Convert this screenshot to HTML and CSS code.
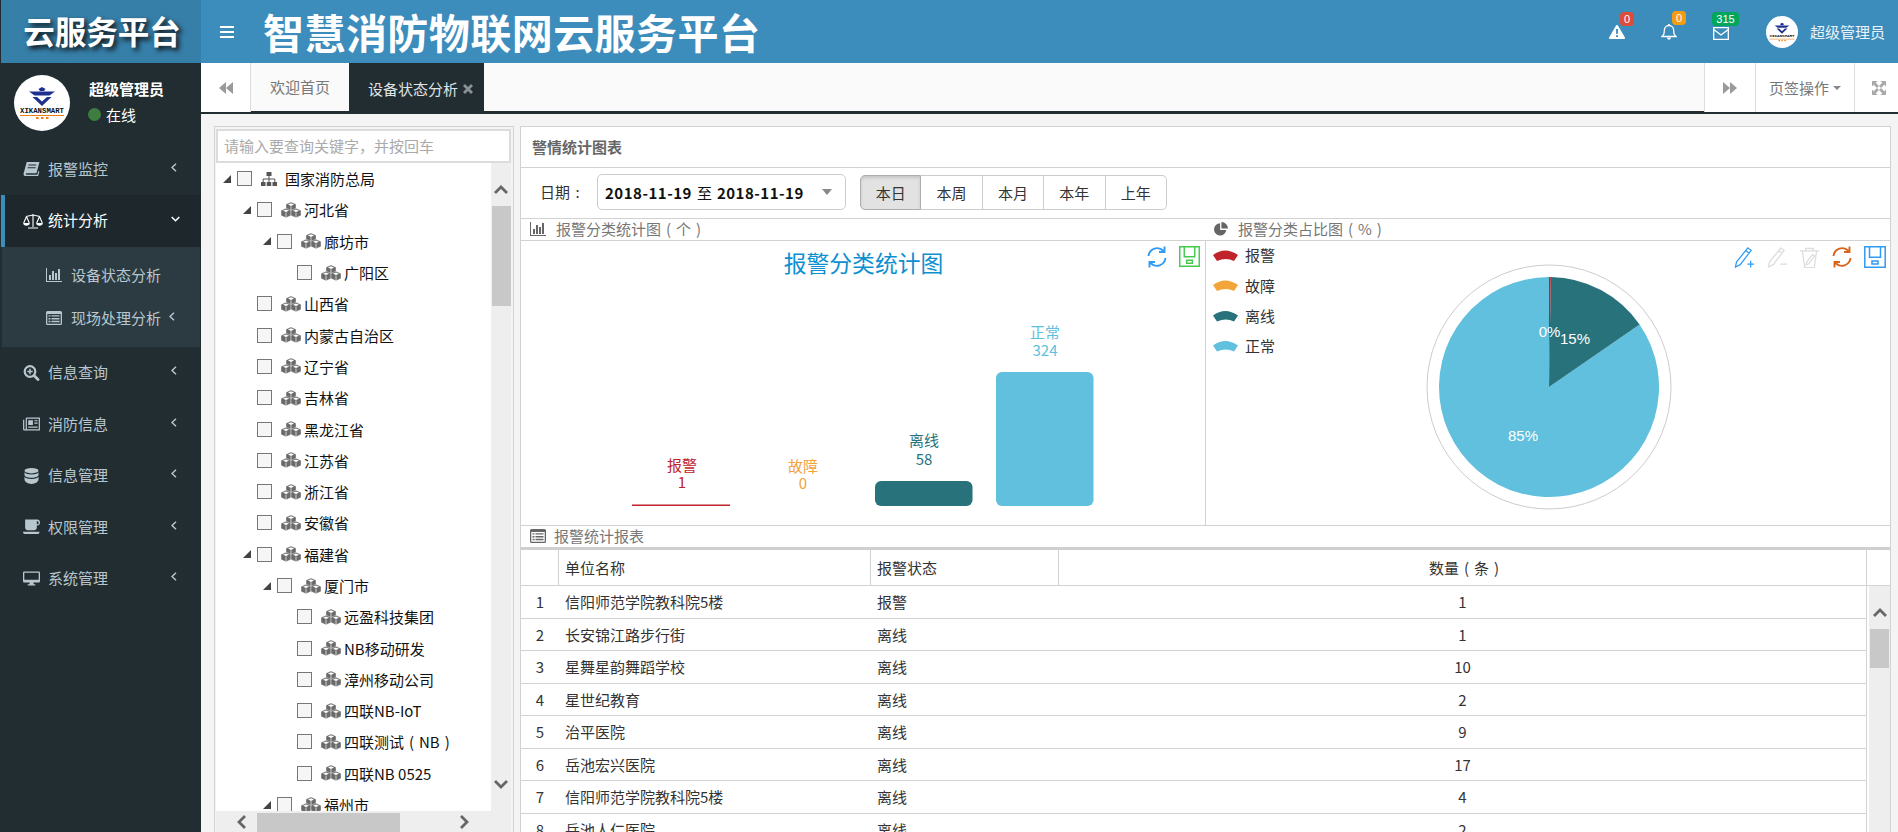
FILE: index.html
```html
<!DOCTYPE html>
<html lang="zh-CN">
<head>
<meta charset="utf-8">
<title>智慧消防物联网云服务平台</title>
<link rel="stylesheet" href="styles.css">
</head>
<body>
<svg class="sprite" aria-hidden="true">
  <symbol id="i-cubes" viewBox="0 0 20 16"><path fill="currentColor" stroke="#fff" stroke-width=".4" d="M10 0l5 2.200v5.200l-5 2.200-5-2.200V2.200z"/><path fill="#fff" d="M10 1.300l3 1.300-3 1.300-3-1.300z"/><path stroke="#fff" stroke-width=".7" d="M10 4.200v5"/><g transform="translate(-5 6.200)"><path fill="currentColor" stroke="#fff" stroke-width=".4" d="M10 0l5 2.200v5.200l-5 2.200-5-2.200V2.200z"/><path fill="#fff" d="M10 1.300l3 1.300-3 1.300-3-1.300z"/><path stroke="#fff" stroke-width=".7" d="M10 4.200v5"/></g><g transform="translate(5 6.200)"><path fill="currentColor" stroke="#fff" stroke-width=".4" d="M10 0l5 2.200v5.200l-5 2.200-5-2.200V2.200z"/><path fill="#fff" d="M10 1.300l3 1.300-3 1.300-3-1.300z"/><path stroke="#fff" stroke-width=".7" d="M10 4.200v5"/></g></symbol>
  <symbol id="i-sitemap" viewBox="0 0 16 14"><path fill="currentColor" d="M5.500 0h5v4h-5zM0 10h4.500v4H0zM5.750 10h4.500v4h-4.500zM11.500 10H16v4h-4.500z"/><path fill="none" stroke="currentColor" d="M8 4v6M2.200 10V7h11.600v3"/></symbol>
  <symbol id="i-book" viewBox="0 0 16 14"><path fill="currentColor" d="M3.500.3H15.500l-2.800 10.700H3.400c-1 0-1 1.500 0 1.500h10.100l1-3.700.9.600-1.100 4.300H2.500C1 13.700.2 12.400.6 11z"/><path stroke="#222d32" d="M5 3.300h7.500M4.400 5.800h7.500"/></symbol>
  <symbol id="i-scale" viewBox="0 0 20 16"><path fill="none" stroke="currentColor" stroke-width="1.100" d="M10 1v13M5 15h10M3 3.500l7-1.500 7 1.500M3.500 3.500L.7 10M3.500 3.500L6.300 10M16.500 3.500L13.700 10M16.500 3.500L19.300 10"/><path fill="currentColor" d="M.2 10h6.600c0 2-1.500 2.700-3.300 2.700S.2 12 .2 10zM13.200 10h6.600c0 2-1.500 2.700-3.300 2.700s-3.300-.7-3.300-2.700z"/></symbol>
  <symbol id="i-bars" viewBox="0 0 16 14"><path fill="currentColor" d="M0 0h1v13h15v1H0zM3 7h2v5H3zM6 3h2v9H6zM9 5h2v7H9zM12 1h2v11h-2z"/></symbol>
  <symbol id="i-list" viewBox="0 0 16 14"><path fill="currentColor" fill-rule="evenodd" d="M1.500 0h13A1.500 1.500 0 0 1 16 1.500v11a1.500 1.500 0 0 1-1.500 1.500h-13A1.500 1.500 0 0 1 0 12.500v-11A1.500 1.500 0 0 1 1.500 0zM1.300 3v9.700h13.400V3zM2.500 4.200h2v1.400h-2zM5.500 4.200h8v1.400h-8zM2.500 7h2v1.400h-2zM5.500 7h8v1.400h-8zM2.500 9.800h2v1.400h-2zM5.500 9.800h8v1.400h-8z"/></symbol>
  <symbol id="i-search" viewBox="0 0 16 16"><circle cx="6.500" cy="6.500" r="5.300" fill="none" stroke="currentColor" stroke-width="2.200"/><path stroke="currentColor" stroke-width="2.800" stroke-linecap="round" d="M10.800 10.800l3.700 3.700"/><path stroke="currentColor" stroke-width="1.500" d="M3.800 6.500h5.400M6.500 3.800v5.400"/></symbol>
  <symbol id="i-news" viewBox="0 0 18 14"><path fill="none" stroke="currentColor" stroke-width="1.300" d="M3.500.7h13.800v12.600H1.200a.6.600 0 0 1-.5-.6V2.500M3.500.7v12"/><path fill="currentColor" d="M5.500 3h5v5h-5zM12 3h3.500v1.200H12zM12 5.500h3.500v1.200H12zM5.500 9.700h10v1.200h-10z"/></symbol>
  <symbol id="i-db" viewBox="0 0 14 16"><ellipse cx="7" cy="2.700" rx="7" ry="2.700" fill="currentColor"/><path fill="currentColor" d="M0 4.300c1 1.600 3.700 2.200 7 2.200s6-.6 7-2.200v2.800c0 1.500-3 2.700-7 2.700S0 8.600 0 7.100zM0 8.800c1 1.600 3.700 2.200 7 2.200s6-.6 7-2.200v2.500C14 13.800 11 16 7 16s-7-2.200-7-4.700z"/></symbol>
  <symbol id="i-coffee" viewBox="0 0 16 14"><path fill="currentColor" fill-rule="evenodd" d="M2 0h11.500C15 0 16 1.200 16 2.800S15 5.700 13.500 5.700H13v1.800C13 9 12 10 10.500 10h-6C3 10 2 9 2 7.500zM13 1.500v2.900h.5c.7 0 1.200-.6 1.200-1.500s-.5-1.400-1.200-1.400z"/><path fill="currentColor" d="M0 11.500h15.500c0 1.300-.8 2.200-2 2.200H2c-1.200 0-2-.9-2-2.200z"/></symbol>
  <symbol id="i-desktop" viewBox="0 0 17 15"><path fill="currentColor" fill-rule="evenodd" d="M1.200 0h14.600A1.200 1.200 0 0 1 17 1.200v8.600A1.200 1.200 0 0 1 15.800 11H10.500v1.700h1.800V14H4.700v-1.300h1.800V11H1.200A1.200 1.200 0 0 1 0 9.800V1.200A1.200 1.200 0 0 1 1.200 0zM1.300 1.300v7h14.400v-7z"/></symbol>
  <symbol id="i-pie" viewBox="0 0 16 16"><path fill="currentColor" d="M7 1.500A7 7 0 1 0 14 9H7zM8.500 0v7.500H16A7.500 7.500 0 0 0 8.500 0z"/></symbol>
  <symbol id="i-warn" viewBox="0 0 16 14"><path fill="#fff" d="M8 0c.5 0 .9.300 1.100.7l6.700 11.600c.400.800 0 1.700-1 1.700H1.200c-1 0-1.400-.9-1-1.700L6.900.7C7.100.3 7.500 0 8 0z"/><path fill="#3c8dbc" d="M7 4h2l-.2 5H7.200zM7 10.200h2V12H7z"/></symbol>
  <symbol id="i-bell" viewBox="0 0 16 16"><path fill="none" stroke="#fff" stroke-width="1.300" d="M1 12.500c1.500-1 2.300-2.500 2.300-6C3.300 3.500 5.300 1.500 8 1.500s4.700 2 4.700 5c0 3.500.8 5 2.300 6z"/><path fill="#fff" d="M6 13.500h4c0 1.300-.9 2.200-2 2.200s-2-.9-2-2.200zM7.200 0h1.600v2H7.200z"/></symbol>
  <symbol id="i-mail" viewBox="0 0 16 13"><path fill="none" stroke="#fff" stroke-width="1.300" d="M.7.700h14.600v11.600H.7zM.7 2.500L8 8l7.300-5.500"/></symbol>
  <symbol id="i-back" viewBox="0 0 14 12"><path fill="currentColor" d="M7 0v12L0 6zM14 0v12L7 6z"/></symbol>
  <symbol id="i-fwd" viewBox="0 0 14 12"><path fill="currentColor" d="M0 0v12l7-6zM7 0v12l7-6z"/></symbol>
  <symbol id="i-close" viewBox="0 0 10 10"><path stroke="currentColor" stroke-width="2.800" d="M1 1l8 8M9 1l-8 8"/></symbol>
  <symbol id="i-expand" viewBox="0 0 14 14"><path fill="currentColor" d="M0 0h5.500L3.800 1.700 7 4.900 4.900 7 1.700 3.800 0 5.500zM14 0v5.500l-1.700-1.700L9.100 7 7 4.900l3.200-3.200L8.500 0zM0 14V8.500l1.700 1.700L4.900 7 7 9.100l-3.200 3.200L5.500 14zM14 14H8.500l1.700-1.700L7 9.100 9.100 7l3.200 3.200L14 8.500z"/></symbol>
  <symbol id="i-refresh" viewBox="0 0 22 22"><path fill="none" stroke="currentColor" stroke-width="1.900" d="M2.500 10A8.700 8.700 0 0 1 17.500 5M18.500 .5V6H13M19.500 12A8.700 8.700 0 0 1 4.500 17M3.500 21.500V16H9"/></symbol>
  <symbol id="i-save" viewBox="0 0 22 22"><path fill="none" stroke="currentColor" stroke-width="1.500" d="M.8.800h20.400v20.400H.8zM5.500.8v10.500h11V.8M8 15h6v3H8z"/></symbol>
  <symbol id="i-penplus" viewBox="0 0 22 22"><path fill="none" stroke="currentColor" stroke-width="1.300" d="M14.500 1l3.500 2.500L6.500 18.500 1.500 21l1.200-5.500zM12.500 4l3.500 2.800M14 18h7M17.500 14.500v7"/></symbol>
  <symbol id="i-penminus" viewBox="0 0 22 22"><path fill="none" stroke="currentColor" stroke-width="1.300" d="M14.500 1l3.500 2.500L6.500 18.500 1.500 21l1.200-5.500zM12.500 4l3.500 2.800M14 18h7"/></symbol>
  <symbol id="i-trash" viewBox="0 0 22 22"><path fill="none" stroke="currentColor" stroke-width="1.300" d="M1 4h20M7 4V1.500h8V4M3.500 4l2.500 17.500h10L18.500 4M14 8l-6 8-.6 3 3-1.600 6-8z"/></symbol>
  <symbol id="i-logo" viewBox="0 0 56 56"><path fill="#1d2f8f" d="M15 16.500h26l-5.500 4h-15z"/><path fill="#1d2f8f" d="M18.500 22h4.500l5 4.500 5-4.500h4.500L28 31z"/><path fill="#1d2f8f" d="M24.500 14l3.500-2 3.500 2-1.500 2h-4z"/><path stroke="#ef7d14" d="M6 40.500h44"/><path fill="#ef7d14" d="M22 42h2.500v2H22zM27 42h2.500v2H27zM32 42h2.500v2H32z"/></symbol>
</svg>

<div class="app">
  <header class="topbar">
    <div class="brand">云服务平台</div>
    <div class="burger" aria-label="菜单"><i></i><i></i><i></i></div>
    <h1 class="app-title">智慧消防物联网云服务平台</h1>
    <div class="top-right">
      <div class="nav-icon nav-warn"><svg class="ni-warn"><use href="#i-warn"/></svg><span class="badge b-red">0</span></div>
      <div class="nav-icon nav-bell"><svg class="ni-bell"><use href="#i-bell"/></svg><span class="badge b-orange">0</span></div>
      <div class="nav-icon nav-mail"><svg class="ni-mail"><use href="#i-mail"/></svg><span class="badge b-green">315</span></div>
      <svg class="top-avatar" viewBox="0 0 56 56"><use href="#i-logo" width="56" height="56"/><text x="28" y="37.500" class="logo-text" textLength="44" lengthAdjust="spacingAndGlyphs">XIKANSMART</text></svg>
      <span class="top-user">超级管理员</span>
    </div>
  </header>

  <div class="main">
    <aside class="sidebar">
      <div class="user-panel">
        <svg class="avatar" viewBox="0 0 56 56"><use href="#i-logo" width="56" height="56"/><text x="28" y="37.500" class="logo-text" textLength="44" lengthAdjust="spacingAndGlyphs">XIKANSMART</text></svg>
        <div class="user-info">
          <div class="user-name">超级管理员</div>
          <div class="user-state"><i class="dot"></i>在线</div>
        </div>
      </div>
      <nav class="menu">
        <a class="menu-item"><svg class="mi"><use href="#i-book"/></svg><span>报警监控</span><svg class="chev" viewBox="0 0 6 9"><path d="M5 .7L1 4.500 5 8.300"/></svg></a>
        <a class="menu-item active"><svg class="mi"><use href="#i-scale"/></svg><span>统计分析</span><svg class="chev-down" viewBox="0 0 9 6"><path d="M.7 1l3.800 3.800L8.300 1"/></svg></a>
        <div class="submenu">
          <a class="sub-item"><svg class="si"><use href="#i-bars"/></svg><span>设备状态分析</span></a>
          <a class="sub-item"><svg class="si"><use href="#i-list"/></svg><span>现场处理分析</span><svg class="chev sub-chev" viewBox="0 0 6 9"><path d="M5 .7L1 4.500 5 8.300"/></svg></a>
        </div>
        <a class="menu-item"><svg class="mi"><use href="#i-search"/></svg><span>信息查询</span><svg class="chev" viewBox="0 0 6 9"><path d="M5 .7L1 4.500 5 8.300"/></svg></a>
        <a class="menu-item"><svg class="mi"><use href="#i-news"/></svg><span>消防信息</span><svg class="chev" viewBox="0 0 6 9"><path d="M5 .7L1 4.500 5 8.300"/></svg></a>
        <a class="menu-item"><svg class="mi"><use href="#i-db"/></svg><span>信息管理</span><svg class="chev" viewBox="0 0 6 9"><path d="M5 .7L1 4.500 5 8.300"/></svg></a>
        <a class="menu-item"><svg class="mi"><use href="#i-coffee"/></svg><span>权限管理</span><svg class="chev" viewBox="0 0 6 9"><path d="M5 .7L1 4.500 5 8.300"/></svg></a>
        <a class="menu-item"><svg class="mi"><use href="#i-desktop"/></svg><span>系统管理</span><svg class="chev" viewBox="0 0 6 9"><path d="M5 .7L1 4.500 5 8.300"/></svg></a>
      </nav>
    </aside>

    <div class="workspace">
      <div class="tabbar">
        <div class="tab-ctl ctl-back"><svg class="ctl-arrow"><use href="#i-back"/></svg></div>
        <div class="tab">欢迎首页</div>
        <div class="tab tab-active">设备状态分析<svg class="tab-x"><use href="#i-close"/></svg></div>
        <div class="tab-fill"></div>
        <div class="tab-ctl ctl-fwd"><svg class="ctl-arrow"><use href="#i-fwd"/></svg></div>
        <div class="tab-ctl ctl-ops">页签操作<i class="caret"></i></div>
        <div class="tab-ctl ctl-full"><svg class="ctl-expand"><use href="#i-expand"/></svg></div>
      </div>

      <div class="content">
        <section class="tree-panel">
          <input class="tree-search" type="text" placeholder="请输入要查询关键字，并按回车">
          <div class="tree-body">
            <ul class="tree">
              <li class="node l0 open"><i class="tog"></i><i class="cb"></i><svg class="ic-site"><use href="#i-sitemap"/></svg><span>国家消防总局</span></li>
              <li class="node l1 open"><i class="tog"></i><i class="cb"></i><svg class="ic"><use href="#i-cubes"/></svg><span>河北省</span></li>
              <li class="node l2 open"><i class="tog"></i><i class="cb"></i><svg class="ic"><use href="#i-cubes"/></svg><span>廊坊市</span></li>
              <li class="node l3"><i class="tog"></i><i class="cb"></i><svg class="ic"><use href="#i-cubes"/></svg><span>广阳区</span></li>
              <li class="node l1"><i class="tog"></i><i class="cb"></i><svg class="ic"><use href="#i-cubes"/></svg><span>山西省</span></li>
              <li class="node l1"><i class="tog"></i><i class="cb"></i><svg class="ic"><use href="#i-cubes"/></svg><span>内蒙古自治区</span></li>
              <li class="node l1"><i class="tog"></i><i class="cb"></i><svg class="ic"><use href="#i-cubes"/></svg><span>辽宁省</span></li>
              <li class="node l1"><i class="tog"></i><i class="cb"></i><svg class="ic"><use href="#i-cubes"/></svg><span>吉林省</span></li>
              <li class="node l1"><i class="tog"></i><i class="cb"></i><svg class="ic"><use href="#i-cubes"/></svg><span>黑龙江省</span></li>
              <li class="node l1"><i class="tog"></i><i class="cb"></i><svg class="ic"><use href="#i-cubes"/></svg><span>江苏省</span></li>
              <li class="node l1"><i class="tog"></i><i class="cb"></i><svg class="ic"><use href="#i-cubes"/></svg><span>浙江省</span></li>
              <li class="node l1"><i class="tog"></i><i class="cb"></i><svg class="ic"><use href="#i-cubes"/></svg><span>安徽省</span></li>
              <li class="node l1 open"><i class="tog"></i><i class="cb"></i><svg class="ic"><use href="#i-cubes"/></svg><span>福建省</span></li>
              <li class="node l2 open"><i class="tog"></i><i class="cb"></i><svg class="ic"><use href="#i-cubes"/></svg><span>厦门市</span></li>
              <li class="node l3"><i class="tog"></i><i class="cb"></i><svg class="ic"><use href="#i-cubes"/></svg><span>远盈科技集团</span></li>
              <li class="node l3"><i class="tog"></i><i class="cb"></i><svg class="ic"><use href="#i-cubes"/></svg><span>NB移动研发</span></li>
              <li class="node l3"><i class="tog"></i><i class="cb"></i><svg class="ic"><use href="#i-cubes"/></svg><span>漳州移动公司</span></li>
              <li class="node l3"><i class="tog"></i><i class="cb"></i><svg class="ic"><use href="#i-cubes"/></svg><span>四联NB-IoT</span></li>
              <li class="node l3"><i class="tog"></i><i class="cb"></i><svg class="ic"><use href="#i-cubes"/></svg><span>四联测试<span class="fw">(</span>NB<span class="fw">)</span></span></li>
              <li class="node l3"><i class="tog"></i><i class="cb"></i><svg class="ic"><use href="#i-cubes"/></svg><span>四联NB 0525</span></li>
              <li class="node l2 open"><i class="tog"></i><i class="cb"></i><svg class="ic"><use href="#i-cubes"/></svg><span>福州市</span></li>
            </ul>
            <div class="hbar">
              <svg class="sb-arrow sb-left" viewBox="0 0 10 14"><path d="M8 1L2 7l6 6"/></svg>
              <i class="hthumb"></i>
              <svg class="sb-arrow sb-right" viewBox="0 0 10 14"><path d="M2 1l6 6-6 6"/></svg>
            </div>
            <div class="vbar">
              <svg class="sb-arrow sb-up" viewBox="0 0 14 10"><path d="M1 8l6-6 6 6"/></svg>
              <i class="vthumb"></i>
              <svg class="sb-arrow sb-down" viewBox="0 0 14 10"><path d="M1 2l6 6 6-6"/></svg>
            </div>
          </div>
        </section>

        <section class="report-panel">
          <div class="panel-title">警情统计图表</div>
          <div class="filter">
            <label class="filter-label">日期<span class="fw">:</span></label>
            <div class="date-select"><b>2018-11-19</b> 至 <b>2018-11-19</b><i class="date-caret"></i></div>
            <div class="btn-group">
              <button class="btn on">本日</button><button class="btn">本周</button><button class="btn">本月</button><button class="btn">本年</button><button class="btn">上年</button>
            </div>
          </div>
          <div class="chart-heads">
            <div class="sec-head head-bar"><svg class="sec-ic"><use href="#i-bars"/></svg>报警分类统计图<span class="fw">(</span>个<span class="fw">)</span></div>
            <div class="sec-head head-pie"><svg class="sec-ic"><use href="#i-pie"/></svg>报警分类占比图<span class="fw">(</span>%<span class="fw">)</span></div>
          </div>
          <div class="charts">
            <svg class="chart chart-bar" viewBox="521 241 684 284">
              <text class="c-title" x="863.500" y="271.500">报警分类统计图</text>
              <use href="#i-refresh" class="t-blue" x="1146" y="246" width="22" height="22"/>
              <use href="#i-save" class="t-green" x="1179" y="246" width="21" height="21"/>
              <text class="c-lab f-red" x="682" y="470.500">报警</text><text class="c-lab f-red" x="682" y="488">1</text>
              <rect class="f-red" x="632" y="504.500" width="98" height="1.500"/>
              <text class="c-lab f-orange" x="803" y="471.500">故障</text><text class="c-lab f-orange" x="803" y="489">0</text>
              <text class="c-lab f-teal" x="924" y="446">离线</text><text class="c-lab f-teal" x="924" y="464.500">58</text>
              <rect class="f-teal" x="875" y="481" width="97.500" height="25" rx="6"/>
              <text class="c-lab f-blue" x="1045" y="337.500">正常</text><text class="c-lab f-blue" x="1045" y="355.500">324</text>
              <rect class="f-blue" x="996" y="372" width="97.500" height="134" rx="6"/>
            </svg>
            <svg class="chart chart-pie" viewBox="1206 241 684 284">
              <path class="f-red" d="M1213 255q12-9 25 0l-4 6q-8-4-17 0z"/><text class="c-leg" x="1245" y="261">报警</text>
              <path class="f-orange" d="M1213 285q12-9 25 0l-4 6q-8-4-17 0z"/><text class="c-leg" x="1245" y="292">故障</text>
              <path class="f-teal" d="M1213 315.500q12-9 25 0l-4 6q-8-4-17 0z"/><text class="c-leg" x="1245" y="322">离线</text>
              <path class="f-blue" d="M1213 345.500q12-9 25 0l-4 6q-8-4-17 0z"/><text class="c-leg" x="1245" y="352">正常</text>
              <use href="#i-penplus" class="t-blue" x="1734" y="247" width="21" height="21"/>
              <use href="#i-penminus" class="t-gray" x="1767" y="247" width="21" height="21"/>
              <use href="#i-trash" class="t-gray" x="1799" y="247" width="21" height="21"/>
              <use href="#i-refresh" class="t-orange" x="1831" y="246" width="22" height="22"/>
              <use href="#i-save" class="t-blue" x="1864" y="246" width="22" height="22"/>
              <circle class="pie-ring" cx="1549" cy="387" r="122"/>
              <path class="f-blue" d="M1549 387L1639.600 324.600A110 110 0 1 1 1549 277z"/>
              <path class="f-teal" d="M1549 387L1550.800 277A110 110 0 0 1 1639.600 324.600z"/>
              <path class="f-red" d="M1549 387L1549 277A110 110 0 0 1 1550.800 277z"/>
              <text class="c-pct" x="1549.500" y="337">0%</text>
              <text class="c-pct" x="1575" y="343.500">15%</text>
              <text class="c-pct" x="1523" y="441">85%</text>
            </svg>
          </div>
          <div class="sec-head head-table"><svg class="sec-ic"><use href="#i-list"/></svg>报警统计报表</div>
          <div class="table-wrap">
            <div class="grid-table">
              <div class="row row-head"><div class="cell num"></div><div class="cell">单位名称</div><div class="cell">报警状态</div><div class="cell mid">数量<span class="fw">(</span>条<span class="fw">)</span></div></div>
              <div class="row"><div class="cell num">1</div><div class="cell">信阳师范学院教科院5楼</div><div class="cell">报警</div><div class="cell mid">1</div></div>
              <div class="row"><div class="cell num">2</div><div class="cell">长安锦江路步行街</div><div class="cell">离线</div><div class="cell mid">1</div></div>
              <div class="row"><div class="cell num">3</div><div class="cell">星舞星韵舞蹈学校</div><div class="cell">离线</div><div class="cell mid">10</div></div>
              <div class="row"><div class="cell num">4</div><div class="cell">星世纪教育</div><div class="cell">离线</div><div class="cell mid">2</div></div>
              <div class="row"><div class="cell num">5</div><div class="cell">治平医院</div><div class="cell">离线</div><div class="cell mid">9</div></div>
              <div class="row"><div class="cell num">6</div><div class="cell">岳池宏兴医院</div><div class="cell">离线</div><div class="cell mid">17</div></div>
              <div class="row"><div class="cell num">7</div><div class="cell">信阳师范学院教科院5楼</div><div class="cell">离线</div><div class="cell mid">4</div></div>
              <div class="row"><div class="cell num">8</div><div class="cell">岳池人仁医院</div><div class="cell">离线</div><div class="cell mid">2</div></div>
            </div>
            <div class="table-side">
              <div class="side-head"></div>
              <div class="side-bar">
                <svg class="sb-arrow sb-up2" viewBox="0 0 14 10"><path d="M1 8l6-6 6 6"/></svg>
                <i class="side-thumb"></i>
              </div>
            </div>
          </div>
        </section>
      </div>
    </div>
  </div>
</div>
</body>
</html>
```

FILE: styles.css
```css
* { box-sizing: border-box; }
html, body { margin: 0; padding: 0; height: 832px; overflow: hidden; }
body { font: 15px/21px "Noto Sans CJK SC", "Liberation Sans", sans-serif; color: #333; background: #f4f4f4; }
.sprite { width: 0; height: 0; position: absolute; overflow: hidden; }
i { display: block; font-style: normal; }
ul { margin: 0; padding: 0; list-style: none; }
svg { display: block; flex: none; }
.fw { display: inline-block; width: 1em; text-align: center; }

.app { height: 832px; display: flex; flex-direction: column; border-left: 1px solid #222d32; overflow: hidden; }

/* top bar */
.topbar { flex: 0 0 63px; display: flex; align-items: center; background: #3c8dbc; color: #fff; }
.brand { width: 200px; height: 63px; padding-left: 2px; background: #367fa9; font-size: 31.500px; font-weight: 700; line-height: 61px; text-align: center; text-shadow: 3px 3px 5px #111; }
.burger { width: 14px; margin: 0 0 0 19px; display: flex; flex-direction: column; gap: 3px; }
.burger i { height: 2px; background: #fff; }
.app-title { margin: 0 0 0 29px; font-size: 41px; font-weight: 700; line-height: 63px; white-space: nowrap; letter-spacing: .45px; }
.top-right { margin-left: auto; display: flex; align-items: center; height: 63px; padding-right: 13px; }
.nav-icon { position: relative; width: 16px; }
.nav-warn { margin-right: 36px; }
.nav-bell { margin-right: 36px; }
.nav-mail { margin-right: 37px; }
.ni-warn { width: 16px; height: 14px; margin-top: 1px; }
.ni-bell { width: 16px; height: 16px; margin-top: 1px; }
.ni-mail { width: 16px; height: 13px; margin-top: 3px; }
.badge { position: absolute; top: -12px; left: 11px; height: 14px; min-width: 14px; padding: 0 3px; border-radius: 4px; font: 11px/14px "Liberation Sans", sans-serif; text-align: center; color: #fff; }
.b-red { background: #dd4b39; }
.b-orange { background: #f39c12; }
.b-green { background: #00a65a; left: -1px; width: 27px; }
.top-avatar { width: 32px; height: 32px; border-radius: 50%; background: #fff; }
.top-user { margin-left: 12px; color: #eaf3f8; white-space: nowrap; }

.main { flex: 1; display: flex; min-height: 0; }

/* sidebar */
.sidebar { flex: 0 0 200px; background: #222d32; color: #b8c7ce; }
.user-panel { height: 80.500px; display: flex; padding: 12px 0 0 13px; }
.avatar { width: 56px; height: 56px; border-radius: 50%; background: #fff; }
.logo-text { font: 700 7px "Liberation Mono", monospace; fill: #111; text-anchor: middle; }
.user-info { margin-left: 19px; }
.user-name { color: #fff; font-weight: 700; line-height: 20px; margin-top: 4px; }
.user-state { display: flex; align-items: center; color: #fff; margin-top: 5px; margin-left: -1px; }
.dot { width: 13px; height: 13px; border-radius: 50%; background: #3e7d3f; margin-right: 5px; }
.menu-item { height: 51.500px; display: flex; align-items: center; padding-left: 22px; position: relative; }
.menu-item span { margin-top: -2px; }
.menu-item.active { background: #1e282c; color: #fff; border-left: 4px solid #3c8dbc; padding-left: 18px; }
.mi { width: 17px; height: 16px; margin-right: 8px; color: #b8c7ce; }
.active .mi { width: 20px; margin-right: 5px; color: #fff; }
.chev { width: 6px; height: 9px; margin-left: auto; margin-right: 24px; margin-top: -4px; fill: none; stroke: #b8c7ce; stroke-width: 1.500; }
.chev-down { width: 9px; height: 6px; margin-left: auto; margin-right: 21px; margin-top: -4px; fill: none; stroke: #fff; stroke-width: 1.500; }
.submenu { height: 100.500px; margin: 0 1px; padding-top: 7px; background: #2c3b41; }
.sub-item { height: 43px; display: flex; align-items: center; padding-left: 44px; }
.sub-item span { margin-top: -1px; }
.si { width: 16px; height: 14px; margin-right: 9px; }
.sub-chev { margin-right: 25px; margin-left: 8px; }

/* tabs */
.workspace { flex: 1; min-width: 0; display: flex; flex-direction: column; }
.tabbar { flex: 0 0 51px; display: flex; background: #fafafa; border-bottom: 3px solid #222d32; color: #777; }
.tab-ctl { display: flex; align-items: center; justify-content: center; background: #fff; border-right: 1px solid #ddd; height: 49px; margin-bottom: -1px; position: relative; }
.ctl-back { width: 50px; }
.ctl-fwd { width: 51px; border-left: 1px solid #ddd; border-right: 0; }
.ctl-ops { width: 99px; border-left: 1px solid #ddd; border-right: 0; }
.ctl-full { width: 44px; border-left: 1px solid #ddd; border-right: 0; padding-left: 5px; }
.ctl-arrow { width: 14px; height: 12px; color: #9a9a9a; }
.ctl-expand { width: 14px; height: 14px; color: #aaa; }
.caret { margin-left: 4px; width: 0; height: 0; border: 4.500px solid transparent; border-top-color: #888; border-bottom: 0; }
.tab { width: 98px; line-height: 48px; text-align: center; white-space: nowrap; }
.tab-active { width: 135px; height: 51px; margin-bottom: -3px; background: #222d32; color: #dfe3e5; display: flex; align-items: center; padding-left: 19px; }
.tab-x { width: 10px; height: 10px; margin-left: 5px; color: #8b9295; }
.tab-fill { flex: 1; }

/* content */
.content { flex: 1; min-height: 0; display: flex; gap: 6px; padding: 12px 7px 0 13px; background: #f4f4f4; }

/* tree */
.tree-panel { flex: 0 0 300px; display: flex; flex-direction: column; border: 1px solid #d2d2d2; border-bottom: 0; padding: 2px 2px 0 1px; background: #f4f4f4; }
.tree-search { flex: 0 0 34px; width: 100%; border: 2px solid #dcdcdc; padding: 0 6px 2px; font: 15px "Noto Sans CJK SC", sans-serif; background: #fff; outline: 0; }
.tree-search::placeholder { color: #aaa; opacity: 1; }
.tree-body { flex: 1; min-height: 0; display: grid; grid-template-columns: 275px 20px; grid-template-rows: 1fr 21px; background: #fff; }
.tree { overflow: hidden; color: #111; }
.node { height: 31.300px; display: flex; align-items: center; white-space: nowrap; }
.l0 { padding-left: 7px; }
.l1 { padding-left: 27px; }
.l2 { padding-left: 47px; }
.l3 { padding-left: 67px; }
.tog { width: 8px; height: 8px; margin-right: 6px; }
.open .tog { width: 0; height: 0; border-style: solid; border-width: 0 0 8px 8px; border-color: transparent transparent #444 transparent; }
.cb { width: 15px; height: 15px; border: 1px solid #777; background: #f6f6f6; margin-right: 9px; }
.ic-site { width: 16px; height: 14px; margin-right: 8px; color: #555; }
.ic { width: 20px; height: 16px; margin-right: 3px; color: #6a6a6a; overflow: visible; }
.hbar { display: flex; align-items: center; background: #eee; padding-left: 21px; grid-row: 2; grid-column: 1; }
.hthumb { width: 143px; height: 19px; margin-left: 10px; margin-top: 2px; background: #c8c8c8; }
.sb-arrow { fill: none; stroke: #666; stroke-width: 2.800; }
.sb-left, .sb-right { width: 10px; height: 14px; }
.sb-right { margin-left: 59px; }
.vbar { grid-row: 1 / 3; grid-column: 2; background: #eee; display: flex; flex-direction: column; align-items: center; padding-top: 22px; }
.sb-up, .sb-down, .sb-up2 { width: 14px; height: 10px; }
.vthumb { width: 19px; height: 100px; margin-top: 11px; background: #c8c8c8; flex: none; }
.sb-down { margin-top: 473px; }

/* report panel */
.report-panel { flex: 1; min-width: 0; display: flex; flex-direction: column; background: #fff; border: 1px solid #d2d2d2; border-bottom: 0; }
.panel-title { flex: 0 0 41px; padding: 0 0 0 11px; line-height: 39px; font-weight: 700; font-size: 15px; color: #666; border-bottom: 1px solid #d2d2d2; }
.filter { flex: 0 0 51px; display: flex; align-items: flex-start; border-bottom: 1px solid #d2d2d2; padding: 6px 0 0 19px; }
.filter-label { width: 57px; line-height: 35px; white-space: nowrap; }
.date-select { width: 249px; height: 36px; border: 1px solid #ccc; border-radius: 5px; display: flex; align-items: center; gap: 5px; padding-left: 7px; position: relative; color: #111; white-space: nowrap; }
.date-select b { letter-spacing: .5px; }
.date-caret { width: 0; height: 0; border: 5px solid transparent; border-top: 6px solid #888; border-bottom: 0; margin-left: auto; margin-right: 13px; }
.btn-group { display: flex; margin: 1px 0 0 14px; }
.btn { width: 61.400px; height: 35px; border: 1px solid #ccc; border-left-width: 0; background: #fff; font: 15px "Noto Sans CJK SC", sans-serif; color: #333; padding: 0; }
.btn:first-child { border-left-width: 1px; border-radius: 5px 0 0 5px; }
.btn:last-child { border-radius: 0 5px 5px 0; }
.btn.on { background: #e2e2e2; box-shadow: inset 0 2px 3px rgba(0,0,0,.13); border-color: #adadad; }
.chart-heads { flex: 0 0 22px; display: flex; border-bottom: 1px solid #d2d2d2; }
.sec-head { display: flex; align-items: flex-start; color: #777; line-height: 20px; white-space: nowrap; }
.sec-ic { width: 16px; height: 14px; color: #666; margin-top: 3px; }
.head-bar { width: 685px; padding-left: 9px; }
.head-bar .sec-ic { margin-right: 10px; }
.head-pie { padding-left: 7px; }
.head-pie .sec-ic { margin-right: 9px; }
.charts { flex: 0 0 285px; display: flex; border-bottom: 1px solid #d2d2d2; }
.chart { height: 284px; }
.chart-bar { width: 685px; border-right: 1px solid #d2d2d2; }
.chart-pie { width: 684px; }
.c-title { font-size: 22.800px; fill: #0e8fd0; text-anchor: middle; }
.c-lab { font-size: 15px; text-anchor: middle; }
.c-leg { font-size: 15px; fill: #333; }
.c-pct { font: 15px "Liberation Sans", sans-serif; fill: #fff; text-anchor: middle; }
.f-red { fill: #c1232b; }
.f-orange { fill: #f3a43b; }
.f-teal { fill: #27727b; }
.f-blue { fill: #60c0dd; }
.t-blue { color: #2f9bf4; }
.t-green { color: #45c94d; }
.t-gray { color: #dcdcdc; }
.t-orange { color: #d9641c; }
.pie-ring { fill: none; stroke: #ccc; }
.head-table { flex: 0 0 24px; padding-left: 9px; border-bottom: 3px solid #cfcfcf; }
.head-table .sec-ic { margin-right: 8px; }
.table-wrap { flex: 1; min-height: 0; display: flex; overflow: hidden; }
.grid-table { width: 1346px; flex: none; border-right: 1px solid #d2d2d2; }
.row { height: 32.500px; display: grid; grid-template-columns: 38px 312px 188px 1fr; border-bottom: 1px solid #d2d2d2; color: #333; align-items: center; }
.row-head { height: 36px; align-items: stretch; }
.row-head .cell { display: flex; align-items: center; border-right: 1px solid #d2d2d2; }
.row-head .cell:last-child { border-right: 0; justify-content: center; padding-left: 8px; }
.cell { padding-left: 6px; white-space: nowrap; }
.num { padding: 0; text-align: center; }
.mid { padding: 0; text-align: center; }
.table-side { flex: 1; display: flex; flex-direction: column; }
.side-head { flex: 0 0 36px; border-bottom: 1px solid #d2d2d2; }
.side-bar { flex: 1; margin-left: 2px; background: #eee; display: flex; flex-direction: column; align-items: center; padding-top: 22px; }
.side-thumb { width: 19px; height: 39px; margin-top: 11px; background: #c8c8c8; }
```
